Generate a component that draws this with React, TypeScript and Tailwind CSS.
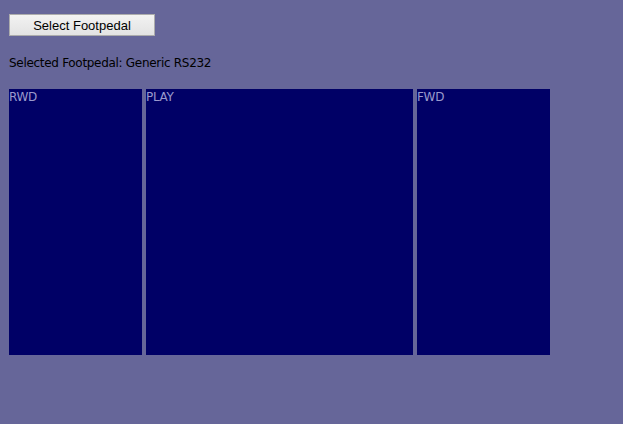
export default function App() {
  const panel =
    "bg-[#000066] text-[#9a9acc] text-[12px] leading-[17px] tracking-[-0.3px] font-['DejaVu_Sans',Verdana,sans-serif]";
  return (
    <div className="w-[623px] h-[424px] bg-[#666699] pt-[14px] pl-[9px]">
      <button className="w-[146px] h-[22px] border border-[#acacac] bg-gradient-to-b from-[#f2f2f2] to-[#e3e3e3] text-[13px] text-black leading-none flex items-center justify-center font-['Liberation_Sans',Arial,sans-serif]">
        Select Footpedal
      </button>
      <div className="mt-[20px] text-[12px] leading-[15px] text-black tracking-[-0.3px] font-['DejaVu_Sans',Verdana,sans-serif]">
        Selected Footpedal: Generic RS232
      </div>
      <div className="mt-[18px] flex gap-[4px] h-[266px]">
        <div className={`w-[133px] ${panel}`}>RWD</div>
        <div className={`w-[267px] ${panel}`}>PLAY</div>
        <div className={`w-[133px] ${panel}`}>FWD</div>
      </div>
    </div>
  );
}
